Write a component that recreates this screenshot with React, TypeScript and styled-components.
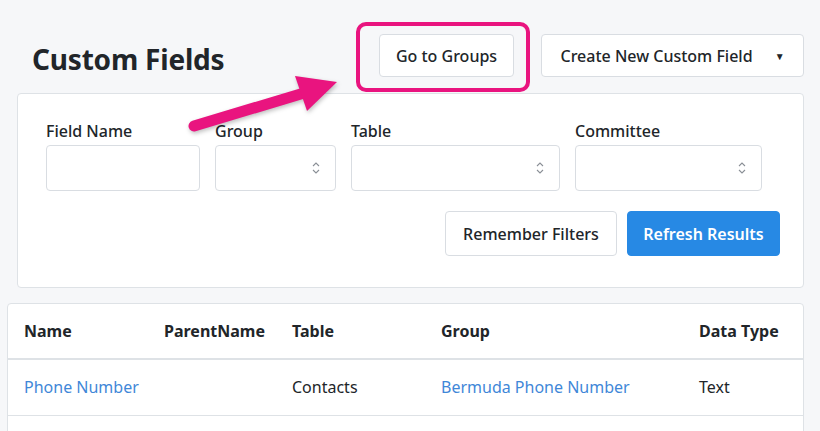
import { FC } from "react";
import styled, { createGlobalStyle } from "styled-components";

const color = {
  page: "#f6f7f9",
  text: "#212529",
  border: "#dee2e6",
  inputBorder: "#d9dde2",
  link: "#3f87d8",
  blue: "#2789e4",
  pink: "#e9147f",
  chevron: "#8a8f96",
};

const GlobalStyle = createGlobalStyle`
  html, body {
    margin: 0;
    padding: 0;
    background: ${color.page};
    font-family: "Noto Sans", "Open Sans", "Liberation Sans", sans-serif;
    color: ${color.text};
  }
  * { box-sizing: border-box; }
`;

const Page = styled.div({
  position: "relative",
  width: "820px",
  height: "431px",
  overflow: "hidden",
  padding: "34px 16px 0 0",
});

const Header = styled.div({
  display: "flex",
  alignItems: "flex-start",
  justifyContent: "space-between",
  paddingLeft: "32px",
  marginBottom: "16px",
});

const Title = styled.h1({
  margin: "8px 0 0",
  fontSize: "28px",
  lineHeight: "34px",
  fontWeight: 700,
  letterSpacing: "-0.2px",
});

const Actions = styled.div({
  display: "flex",
  gap: "27px",
});

const Highlight = styled.div({
  position: "relative",
  "&::after": {
    content: '""',
    position: "absolute",
    left: "-23px",
    right: "-16px",
    top: "-12px",
    bottom: "-15px",
    border: `4px solid ${color.pink}`,
    borderRadius: "10px",
    pointerEvents: "none",
  },
});

const Button = styled.button<{ $primary?: boolean; $width: number }>(
  ({ $primary, $width }) => ({
    display: "inline-flex",
    alignItems: "center",
    justifyContent: "center",
    width: `${$width}px`,
    height: "43px",
    padding: 0,
    fontFamily: "inherit",
    fontSize: "16px",
    fontWeight: $primary ? 600 : 500,
    color: $primary ? "#ffffff" : color.text,
    backgroundColor: $primary ? color.blue : "#ffffff",
    border: `1px solid ${$primary ? color.blue : color.inputBorder}`,
    borderRadius: "4px",
    cursor: "pointer",
  })
);

const Caret = styled.span({
  marginLeft: "22px",
  fontSize: "10px",
});

const Card = styled.div<{ $left: number; $top?: number }>(({ $left, $top }) => ({
  marginLeft: `${$left}px`,
  marginTop: `${$top ?? 0}px`,
  backgroundColor: "#ffffff",
  border: `1px solid ${color.border}`,
  borderRadius: "4px",
}));

const Filters = styled.div({
  padding: "25px 23px 31px 28px",
});

const FieldRow = styled.div({
  display: "flex",
  gap: "15px",
});

const Field = styled.label<{ $width: number }>(({ $width }) => ({
  display: "flex",
  flexDirection: "column",
  width: `${$width}px`,
  fontSize: "16px",
  fontWeight: 500,
  lineHeight: "24px",
  gap: "2px",
}));

const Input = styled.div({
  position: "relative",
  height: "46px",
  backgroundColor: "#ffffff",
  border: `1px solid ${color.inputBorder}`,
  borderRadius: "4px",
});

const Chevrons = styled.svg({
  position: "absolute",
  right: "15px",
  top: "16px",
});

const ButtonRow = styled.div({
  display: "flex",
  justifyContent: "flex-end",
  gap: "10px",
  marginTop: "20px",
  "& > button": {
    height: "45px",
  },
});

const Table = styled.table({
  width: "100%",
  borderCollapse: "collapse",
  tableLayout: "fixed",
  fontSize: "16px",
});

const Th = styled.th({
  textAlign: "left",
  fontWeight: 700,
  padding: "0 0 0 16px",
  height: "55px",
  borderBottom: `2px solid ${color.border}`,
  whiteSpace: "nowrap",
});

const Td = styled.td<{ $link?: boolean }>(({ $link }) => ({
  padding: "0 0 0 16px",
  height: "56px",
  color: $link ? color.link : color.text,
  borderBottom: `1px solid ${color.border}`,
  whiteSpace: "nowrap",
}));

const Arrow = styled.svg({
  position: "absolute",
  left: "180px",
  top: "66px",
  filter: "drop-shadow(1px 2px 2px rgba(0,0,0,0.25))",
});

const SelectChevrons: FC = () => (
  <Chevrons width="8" height="12" viewBox="0 0 8 12">
    <path
      d="M1 4 L4 1 L7 4 M1 8 L4 11 L7 8"
      fill="none"
      stroke={color.chevron}
      strokeWidth="1.1"
    />
  </Chevrons>
);

const fields = [
  { label: "Field Name", width: 154, select: false },
  { label: "Group", width: 121, select: true },
  { label: "Table", width: 209, select: true },
  { label: "Committee", width: 187, select: true },
];

const columns = [
  { name: "Name", width: 140 },
  { name: "ParentName", width: 128 },
  { name: "Table", width: 149 },
  { name: "Group", width: 258 },
  { name: "Data Type", width: undefined },
];

const App: FC = () => {
  return (
    <>
      <GlobalStyle />
      <Page>
        <Header>
          <Title>Custom Fields</Title>
          <Actions>
            <Highlight>
              <Button $width={135}>Go to Groups</Button>
            </Highlight>
            <Button $width={263}>
              Create New Custom Field<Caret>▼</Caret>
            </Button>
          </Actions>
        </Header>

        <Card $left={17}>
          <Filters>
            <FieldRow>
              {fields.map((field) => (
                <Field key={field.label} $width={field.width}>
                  {field.label}
                  <Input>{field.select && <SelectChevrons />}</Input>
                </Field>
              ))}
            </FieldRow>
            <ButtonRow>
              <Button $width={172}>Remember Filters</Button>
              <Button $primary $width={153}>
                Refresh Results
              </Button>
            </ButtonRow>
          </Filters>
        </Card>

        <Card $left={7} $top={15}>
          <Table>
            <colgroup>
              {columns.map((col) => (
                <col
                  key={col.name}
                  style={col.width ? { width: `${col.width}px` } : undefined}
                />
              ))}
            </colgroup>
            <thead>
              <tr>
                {columns.map((col) => (
                  <Th key={col.name}>{col.name}</Th>
                ))}
              </tr>
            </thead>
            <tbody>
              <tr>
                <Td $link>Phone Number</Td>
                <Td />
                <Td>Contacts</Td>
                <Td $link>Bermuda Phone Number</Td>
                <Td>Text</Td>
              </tr>
              <tr>
                <Td />
                <Td />
                <Td />
                <Td />
                <Td />
              </tr>
            </tbody>
          </Table>
        </Card>

        <Arrow width="170" height="70" viewBox="180 66 170 70">
          <line
            x1="194"
            y1="126"
            x2="304"
            y2="93"
            stroke={color.pink}
            strokeWidth="11"
            strokeLinecap="round"
          />
          <polygon points="337,82 295,76 307,111" fill={color.pink} />
        </Arrow>
      </Page>
    </>
  );
};

export default App;
